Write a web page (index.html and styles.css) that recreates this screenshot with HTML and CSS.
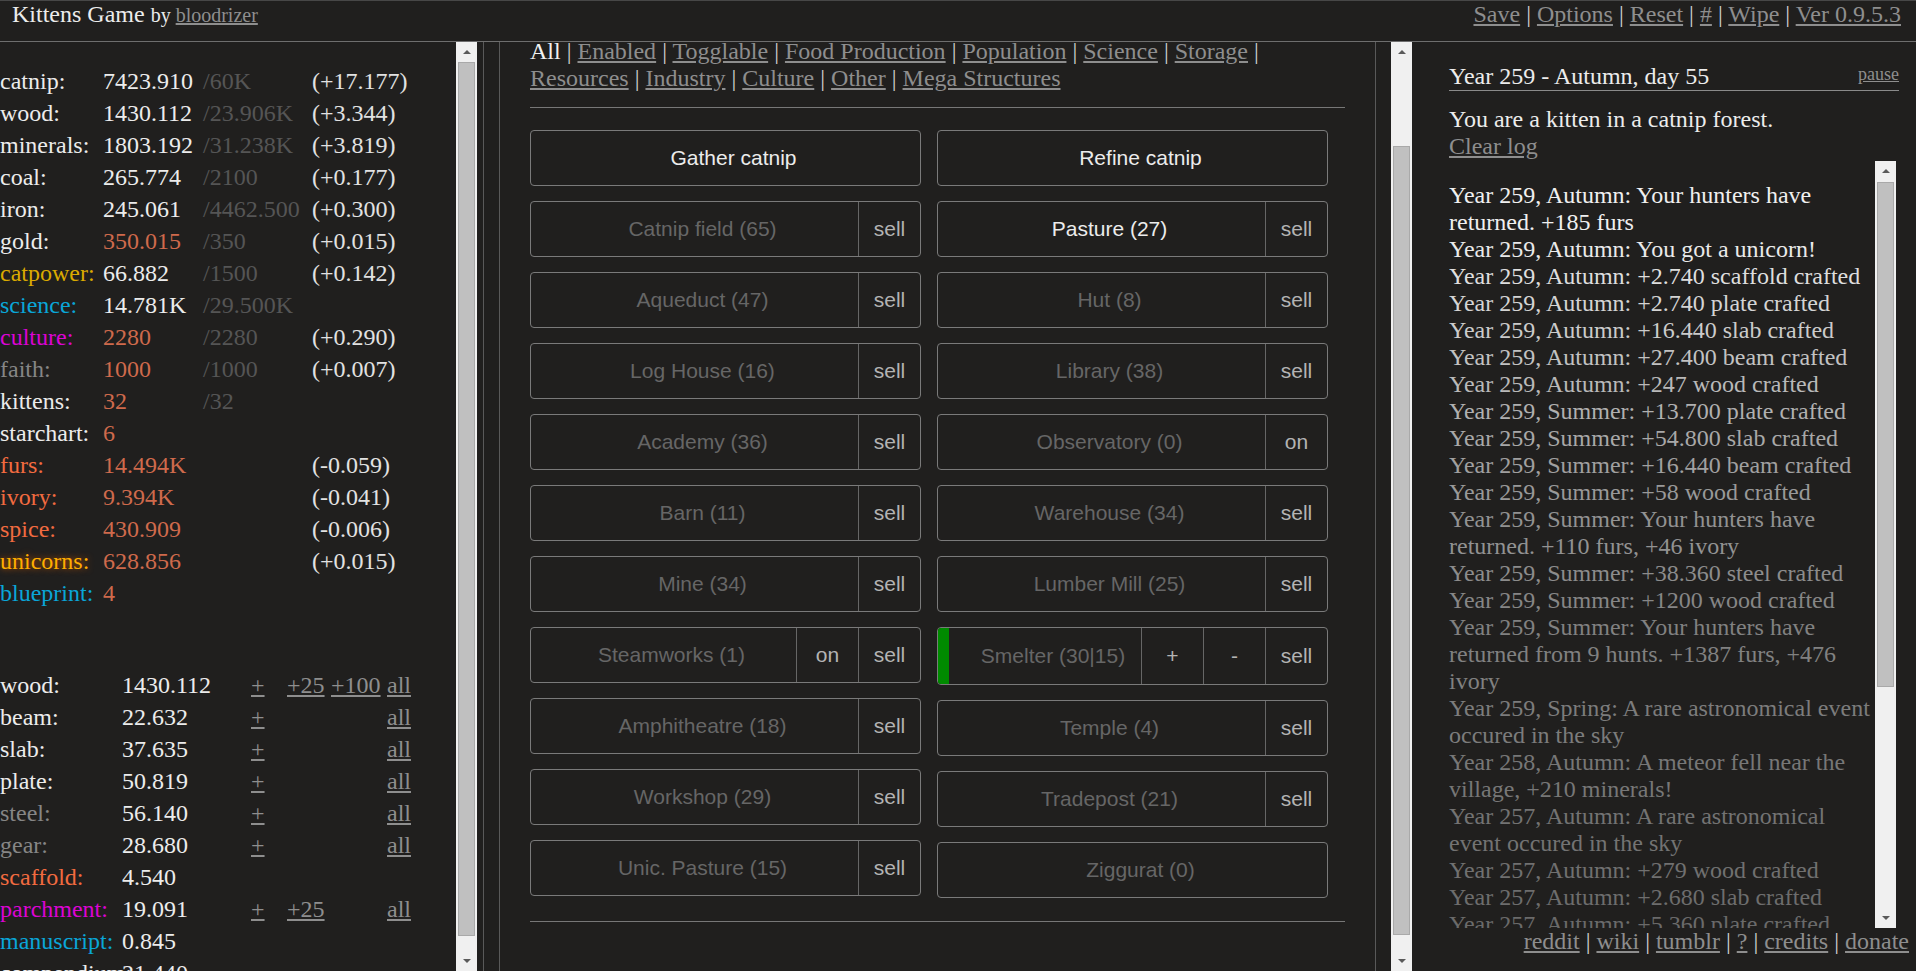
FILE: index.html
```html
<!DOCTYPE html>
<html>
<head>
	<meta charset="utf-8">
	<meta name="viewport" content="width=device-width, initial-scale=1">
	<title>Kittens Game</title>
	<link rel="stylesheet" href="styles.css">
</head>
<body>

<header class="topbar">
	<div class="title">Kittens Game <span class="by">by <a href="#">bloodrizer</a></span></div>
	<div class="toplinks">
		<a href="#">Save</a> | <a href="#">Options</a> | <a href="#">Reset</a> | <a href="#">#</a> | <a href="#">Wipe</a> | <a href="#">Ver 0.9.5.3</a>
	</div>
</header>

<div class="main">

	<!-- resources -->
	<div class="left">
		<table class="res">
			<tr><td class="name">catnip:</td><td class="val">7423.910</td><td class="max">/60K</td><td class="rate">(+17.177)</td></tr>
			<tr><td class="name">wood:</td><td class="val">1430.112</td><td class="max">/23.906K</td><td class="rate">(+3.344)</td></tr>
			<tr><td class="name">minerals:</td><td class="val">1803.192</td><td class="max">/31.238K</td><td class="rate">(+3.819)</td></tr>
			<tr><td class="name">coal:</td><td class="val">265.774</td><td class="max">/2100</td><td class="rate">(+0.177)</td></tr>
			<tr><td class="name">iron:</td><td class="val">245.061</td><td class="max">/4462.500</td><td class="rate">(+0.300)</td></tr>
			<tr><td class="name">gold:</td><td class="val full">350.015</td><td class="max">/350</td><td class="rate">(+0.015)</td></tr>
			<tr><td class="name yellow">catpower:</td><td class="val">66.882</td><td class="max">/1500</td><td class="rate">(+0.142)</td></tr>
			<tr><td class="name blue">science:</td><td class="val">14.781K</td><td class="max">/29.500K</td><td class="rate"></td></tr>
			<tr><td class="name magenta">culture:</td><td class="val full">2280</td><td class="max">/2280</td><td class="rate">(+0.290)</td></tr>
			<tr><td class="name gray">faith:</td><td class="val full">1000</td><td class="max">/1000</td><td class="rate">(+0.007)</td></tr>
			<tr><td class="name">kittens:</td><td class="val full">32</td><td class="max">/32</td><td class="rate"></td></tr>
			<tr><td class="name">starchart:</td><td class="val full">6</td><td class="max"></td><td class="rate"></td></tr>
			<tr><td class="name coral">furs:</td><td class="val full">14.494K</td><td class="max"></td><td class="rate">(-0.059)</td></tr>
			<tr><td class="name coral">ivory:</td><td class="val full">9.394K</td><td class="max"></td><td class="rate">(-0.041)</td></tr>
			<tr><td class="name coral">spice:</td><td class="val full">430.909</td><td class="max"></td><td class="rate">(-0.006)</td></tr>
			<tr><td class="name glow">unicorns:</td><td class="val full">628.856</td><td class="max"></td><td class="rate">(+0.015)</td></tr>
			<tr><td class="name blue">blueprint:</td><td class="val full">4</td><td class="max"></td><td class="rate"></td></tr>
		</table>

		<table class="craft">
			<tr><td class="name">wood:</td><td class="val">1430.112</td><td class="c1"><a href="#">+</a></td><td class="c2"><a href="#">+25</a></td><td class="c3"><a href="#">+100</a></td><td class="c4"><a href="#">all</a></td></tr>
			<tr><td class="name">beam:</td><td class="val">22.632</td><td class="c1"><a href="#">+</a></td><td class="c2"></td><td class="c3"></td><td class="c4"><a href="#">all</a></td></tr>
			<tr><td class="name">slab:</td><td class="val">37.635</td><td class="c1"><a href="#">+</a></td><td class="c2"></td><td class="c3"></td><td class="c4"><a href="#">all</a></td></tr>
			<tr><td class="name">plate:</td><td class="val">50.819</td><td class="c1"><a href="#">+</a></td><td class="c2"></td><td class="c3"></td><td class="c4"><a href="#">all</a></td></tr>
			<tr><td class="name gray">steel:</td><td class="val">56.140</td><td class="c1"><a href="#">+</a></td><td class="c2"></td><td class="c3"></td><td class="c4"><a href="#">all</a></td></tr>
			<tr><td class="name gray">gear:</td><td class="val">28.680</td><td class="c1"><a href="#">+</a></td><td class="c2"></td><td class="c3"></td><td class="c4"><a href="#">all</a></td></tr>
			<tr><td class="name coral">scaffold:</td><td class="val">4.540</td><td class="c1"></td><td class="c2"></td><td class="c3"></td><td class="c4"></td></tr>
			<tr><td class="name magenta">parchment:</td><td class="val">19.091</td><td class="c1"><a href="#">+</a></td><td class="c2"><a href="#">+25</a></td><td class="c3"></td><td class="c4"><a href="#">all</a></td></tr>
			<tr><td class="name blue">manuscript:</td><td class="val">0.845</td><td class="c1"></td><td class="c2"></td><td class="c3"></td><td class="c4"></td></tr>
			<tr><td class="name">compendium:</td><td class="val">21.440</td><td class="c1"></td><td class="c2"></td><td class="c3"></td><td class="c4"></td></tr>
		</table>
	</div>

	<div class="sbar sbar-left">
		<div class="arrow up"></div>
		<div class="thumb"></div>
		<div class="fill"></div>
		<div class="arrow down"></div>
	</div>

	<!-- buildings -->
	<div class="mid-wrap">
		<div class="mid">
			<div class="tabs">
				<span class="cur">All</span> | <a href="#">Enabled</a> | <a href="#">Togglable</a> | <a href="#">Food Production</a> | <a href="#">Population</a> | <a href="#">Science</a> | <a href="#">Storage</a> | <a href="#">Resources</a> | <a href="#">Industry</a> | <a href="#">Culture</a> | <a href="#">Other</a> | <a href="#">Mega Structures</a>
			</div>
			<hr class="rule-top">

			<div class="bld">
				<div class="bld-col">
					<div class="btn bright"><span class="lbl">Gather catnip</span></div>
					<div class="btn"><span class="lbl">Catnip field (65)</span><span class="sub">sell</span></div>
					<div class="btn"><span class="lbl">Aqueduct (47)</span><span class="sub">sell</span></div>
					<div class="btn"><span class="lbl">Log House (16)</span><span class="sub">sell</span></div>
					<div class="btn"><span class="lbl">Academy (36)</span><span class="sub">sell</span></div>
					<div class="btn"><span class="lbl">Barn (11)</span><span class="sub">sell</span></div>
					<div class="btn"><span class="lbl">Mine (34)</span><span class="sub">sell</span></div>
					<div class="btn"><span class="lbl">Steamworks (1)</span><span class="sub">on</span><span class="sub">sell</span></div>
					<div class="btn"><span class="lbl">Amphitheatre (18)</span><span class="sub">sell</span></div>
					<div class="btn"><span class="lbl">Workshop (29)</span><span class="sub">sell</span></div>
					<div class="btn"><span class="lbl">Unic. Pasture (15)</span><span class="sub">sell</span></div>
				</div>
				<div class="bld-col">
					<div class="btn bright"><span class="lbl">Refine catnip</span></div>
					<div class="btn bright"><span class="lbl">Pasture (27)</span><span class="sub">sell</span></div>
					<div class="btn"><span class="lbl">Hut (8)</span><span class="sub">sell</span></div>
					<div class="btn"><span class="lbl">Library (38)</span><span class="sub">sell</span></div>
					<div class="btn"><span class="lbl">Observatory (0)</span><span class="sub">on</span></div>
					<div class="btn"><span class="lbl">Warehouse (34)</span><span class="sub">sell</span></div>
					<div class="btn"><span class="lbl">Lumber Mill (25)</span><span class="sub">sell</span></div>
					<div class="btn smelter"><span class="bar"></span><span class="lbl">Smelter (30|15)</span><span class="sub">+</span><span class="sub">-</span><span class="sub">sell</span></div>
					<div class="btn"><span class="lbl">Temple (4)</span><span class="sub">sell</span></div>
					<div class="btn"><span class="lbl">Tradepost (21)</span><span class="sub">sell</span></div>
					<div class="btn"><span class="lbl">Ziggurat (0)</span></div>
				</div>
			</div>

			<hr class="rule-bottom">
		</div>
	</div>

	<div class="sbar sbar-mid">
		<div class="arrow up"></div>
		<div class="thumb"></div>
		<div class="fill"></div>
		<div class="arrow down"></div>
	</div>

	<!-- log -->
	<div class="right">
		<div class="date">
			<span>Year 259 - Autumn, day 55</span>
			<a href="#" class="pause">pause</a>
		</div>
		<div class="intro">You are a kitten in a catnip forest.</div>
		<a href="#" class="clear">Clear log</a>

		<div class="log-wrap">
			<div class="log">
				<div>Year 259, Autumn: Your hunters have returned. +185 furs</div>
				<div>Year 259, Autumn: You got a unicorn!</div>
				<div>Year 259, Autumn: +2.740 scaffold crafted</div>
				<div>Year 259, Autumn: +2.740 plate crafted</div>
				<div>Year 259, Autumn: +16.440 slab crafted</div>
				<div>Year 259, Autumn: +27.400 beam crafted</div>
				<div>Year 259, Autumn: +247 wood crafted</div>
				<div>Year 259, Summer: +13.700 plate crafted</div>
				<div>Year 259, Summer: +54.800 slab crafted</div>
				<div>Year 259, Summer: +16.440 beam crafted</div>
				<div>Year 259, Summer: +58 wood crafted</div>
				<div>Year 259, Summer: Your hunters have returned. +110 furs, +46 ivory</div>
				<div>Year 259, Summer: +38.360 steel crafted</div>
				<div>Year 259, Summer: +1200 wood crafted</div>
				<div>Year 259, Summer: Your hunters have returned from 9 hunts. +1387 furs, +476 ivory</div>
				<div>Year 259, Spring: A rare astronomical event occured in the sky</div>
				<div>Year 258, Autumn: A meteor fell near the village, +210 minerals!</div>
				<div>Year 257, Autumn: A rare astronomical event occured in the sky</div>
				<div>Year 257, Autumn: +279 wood crafted</div>
				<div>Year 257, Autumn: +2.680 slab crafted</div>
				<div>Year 257, Autumn: +5.360 plate crafted</div>
			</div>
			<div class="sbar sbar-log">
				<div class="arrow up"></div>
				<div class="thumb"></div>
				<div class="fill"></div>
				<div class="arrow down"></div>
			</div>
		</div>

		<div class="footer">
			<a href="#">reddit</a> | <a href="#">wiki</a> | <a href="#">tumblr</a> | <a href="#">?</a> | <a href="#">credits</a> | <a href="#">donate</a>
		</div>
	</div>

</div>

</body>
</html>
```

FILE: styles.css
```css
html, *, *::before,
*::after{
	box-sizing: border-box;
}
body{
	margin: 0;
	height: 971px;
	overflow: hidden;
	background: #201f1e;
	color: #ececec;
	font-family: "Liberation Serif", "Times New Roman", serif;
	font-size: 24px;
}
a{
	color: #8e8e8e;
	text-decoration: underline;
}

/* top bar */
.topbar{
	height: 42px;
	border-top: 1px solid #474747;
	border-bottom: 1px solid #6e6e6e;
	display: flex;
	justify-content: space-between;
	align-items: flex-start;
	padding: 0 15px 0 12px;
	line-height: 27px;
}
.by{
	font-size: 20px;
}
.toplinks{
	color: #d0d0d0;
}

.main{
	display: flex;
	height: 929px;
	overflow: hidden;
}

/* left column */
.left{
	width: 456px;
	flex: none;
	overflow: hidden;
	padding-top: 23px;
}
table{
	border-collapse: collapse;
	table-layout: fixed;
}
td{
	padding: 0;
	height: 32px;
	line-height: 32px;
	white-space: nowrap;
	vertical-align: top;
}
.res{ width: 440px; }
.res .name{ width: 103px; }
.res .val{ width: 100px; }
.res .max{ width: 109px; color: #555; }
.res .rate{ width: 128px; color: #e2e2e2; }
.craft{
	width: 440px;
	margin-top: 60px;
}
.craft .name{ width: 122px; }
.craft .val{ width: 129px; }
.craft .c1{ width: 36px; }
.craft .c2{ width: 44px; }
.craft .c3{ width: 56px; }
.craft .c4{ width: 53px; }

.val.full{ color: #cf6a4c; }
.yellow{ color: #dbaa00; }
.blue{ color: #0aa6d8; }
.magenta{ color: #dc04d4; }
.gray{ color: #868686; }
.coral{ color: #f26b40; }
.glow{
	color: #ffae00;
	text-shadow: 0 0 6px #c75a00;
}

/* fake scrollbars */
.sbar{
	width: 21px;
	flex: none;
	background: #f0f0f0;
	display: flex;
	flex-direction: column;
	align-items: center;
}
.sbar .arrow{
	height: 20px;
	width: 100%;
	flex: none;
	display: flex;
	align-items: center;
	justify-content: center;
}
.sbar .arrow::after{
	content: "";
	border-left: 4px solid transparent;
	border-right: 4px solid transparent;
}
.sbar .up::after{ border-bottom: 4px solid #5a5a5a; }
.sbar .down::after{ border-top: 4px solid #5a5a5a; }
.sbar .thumb{
	width: 17px;
	flex: none;
	background: #c0c0c0;
	border: 1px solid #a9a9a9;
}
.sbar .fill{ flex: 1; }
.sbar-left .thumb{ height: 874px; }
.sbar-mid .thumb{ height: 789px; margin-top: 84px; }
.sbar-log .thumb{ height: 505px; margin-top: 1px; }

/* middle column */
.mid-wrap{
	flex: none;
	margin-left: 6px;
	border-left: 1px solid #595959;
	padding-left: 15px;
	margin-right: 15px;
	display: flex;
}
.mid{
	width: 877px;
	border-left: 1px solid #595959;
	border-right: 1px solid #595959;
	padding: 0 30px;
	overflow: hidden;
}
.tabs{
	margin-top: -4px;
	line-height: 27px;
	color: #cfcfcf;
}
.tabs .cur{
	color: #f2f2f2;
}
hr{
	border: 0;
	border-top: 1px solid #777;
	margin: 0;
}
.rule-top{ margin-top: 15px; }
.rule-bottom{ margin-top: 23px; }

.bld{
	display: flex;
	gap: 16px;
	margin-top: 22px;
	align-items: flex-start;
}
.bld-col{
	width: 391px;
	display: flex;
	flex-direction: column;
	gap: 15px;
}
.btn{
	height: 56px;
	border: 1px solid #7a7a7a;
	border-radius: 4px;
	display: flex;
	overflow: hidden;
	font-family: "Liberation Sans", Arial, sans-serif;
	font-size: 21px;
	color: #666;
}
.btn .lbl{
	flex: 1;
	display: flex;
	align-items: center;
	justify-content: center;
	padding-left: 16px;
}
.btn.bright .lbl{
	color: #ececec;
}
.btn .sub{
	width: 62px;
	flex: none;
	border-left: 1px solid #666;
	display: flex;
	align-items: center;
	justify-content: center;
	color: #b3b3b3;
}
.btn.smelter{
	height: 58px;
}
.btn .bar{
	width: 11px;
	flex: none;
	background: #008a00;
}

/* right column */
.right{
	flex: 1;
	padding: 21px 17px 0 37px;
	overflow: hidden;
}
.date{
	display: flex;
	justify-content: space-between;
	align-items: flex-start;
	line-height: 27px;
	border-bottom: 1px solid #8a8a8a;
}
.pause{
	font-size: 18px;
	line-height: 20px;
	margin-top: 1px;
}
.intro{
	margin-top: 15px;
	line-height: 27px;
}
.clear{
	display: block;
	width: max-content;
	line-height: 27px;
}
.log-wrap{
	display: flex;
	height: 767px;
	margin-top: 1px;
}
.log{
	width: 426px;
	flex: none;
	padding-top: 21px;
	line-height: 27px;
	overflow: hidden;
	color: #6a6a6a;
}
.log div:nth-child(1){ color: #f0f0f0; }
.log div:nth-child(2){ color: #eaeaea; }
.log div:nth-child(3){ color: #dedede; }
.log div:nth-child(4){ color: #d4d4d4; }
.log div:nth-child(5){ color: #cbcbcb; }
.log div:nth-child(6){ color: #c2c2c2; }
.log div:nth-child(7){ color: #b9b9b9; }
.log div:nth-child(8){ color: #b0b0b0; }
.log div:nth-child(9){ color: #a8a8a8; }
.log div:nth-child(10){ color: #a0a0a0; }
.log div:nth-child(11){ color: #999; }
.log div:nth-child(12){ color: #929292; }
.log div:nth-child(13){ color: #8c8c8c; }
.log div:nth-child(14){ color: #868686; }
.log div:nth-child(15){ color: #818181; }
.log div:nth-child(16){ color: #7c7c7c; }
.log div:nth-child(17){ color: #777; }
.log div:nth-child(18){ color: #737373; }
.log div:nth-child(19){ color: #707070; }
.log div:nth-child(20){ color: #6d6d6d; }

.footer{
	text-align: right;
	margin-right: -10px;
	line-height: 27px;
	color: #d0d0d0;
}
```
